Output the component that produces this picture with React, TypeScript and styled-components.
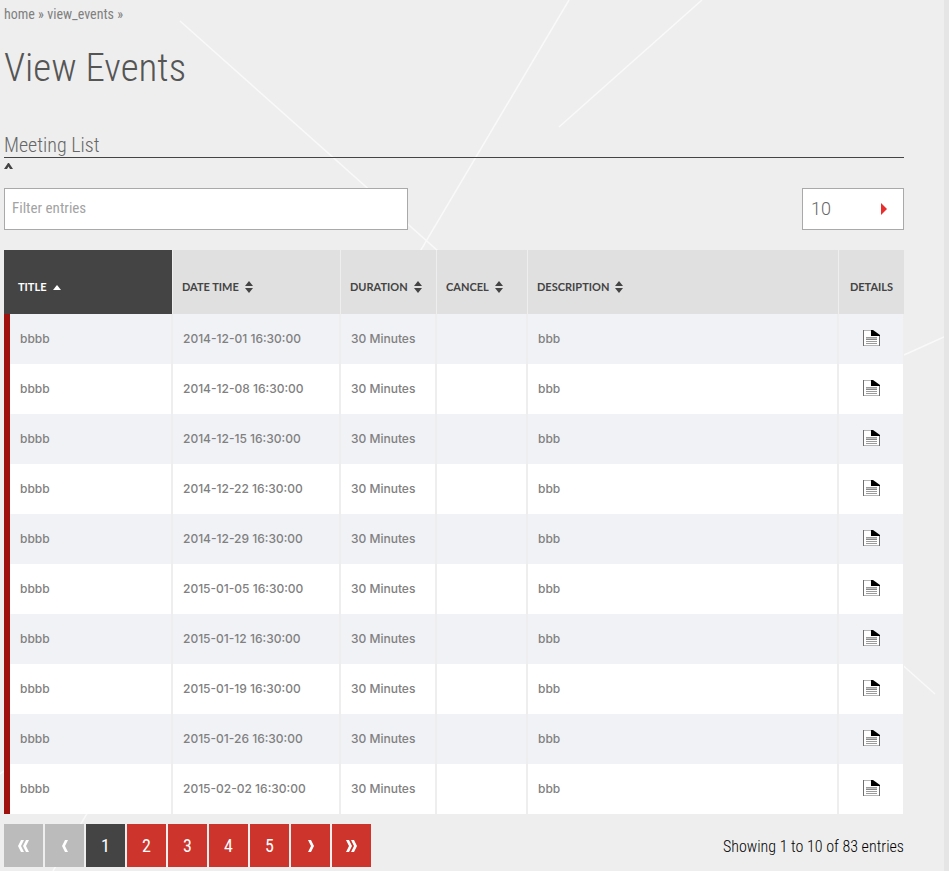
import React, { useState } from "react";
import styled, { createGlobalStyle, css } from "styled-components";

const narrow = `"Roboto Condensed", "Arial Narrow", "Liberation Sans", Arial, sans-serif`;
const wide = `Inter, "Liberation Sans", Arial, sans-serif`;
const heading = `Lato, "Liberation Sans", Arial, sans-serif`;

const GlobalStyle = createGlobalStyle`
  *, *::before, *::after { box-sizing: border-box; }
  html { background: #eeeeee; }
  body { margin: 0; font-family: ${narrow}; font-weight: 300; color: #666666; }
`;

const Page = styled.div`
  position: relative;
  min-height: 100vh;
  border-right: 5px solid #e5e5e5;
  padding: 4px 40px 4px 4px;
  overflow: hidden;
`;

const Backdrop = styled.svg`
  position: absolute;
  top: 0;
  left: 0;
  pointer-events: none;
`;

const Content = styled.main`
  position: relative;
`;

const Breadcrumb = styled.nav`
  font-size: 14px;
  font-weight: 400;
  line-height: 20px;
  color: #808080;

  a {
    color: inherit;
    text-decoration: none;
  }
`;

const Title = styled.h1`
  margin: 18px 0 0;
  font-size: 39px;
  font-weight: 300;
  line-height: 52px;
  color: #555555;
`;

const SectionTitle = styled.h2`
  margin: 38px 0 0;
  padding-top: 1px;
  border-bottom: 1px solid #444444;
  font-size: 20px;
  font-weight: 300;
  line-height: 24px;
`;

const Collapse = styled.button`
  display: flex;
  align-items: center;
  width: 9px;
  height: 16px;
  padding: 0;
  border: 0;
  background: none;
`;

const Filters = styled.div`
  display: flex;
  justify-content: space-between;
  gap: 20px;
  margin: 14px 0 20px;
`;

const FilterInput = styled.input`
  flex: 0 1 404px;
  min-width: 0;
  height: 42px;
  padding: 0 7px 2px;
  border: 1px solid #a9a9a9;
  border-radius: 0;
  background: #ffffff;
  font: 400 15px ${narrow};
  color: #666666;

  &::placeholder {
    color: #a3a3a3;
    opacity: 1;
  }
`;

const SelectBox = styled.div`
  display: grid;
  align-items: center;
  width: 102px;
  height: 42px;
  border: 1px solid #a9a9a9;
  background: #ffffff;

  > * {
    grid-area: 1 / 1;
  }

  > svg {
    justify-self: end;
    margin-right: 16px;
    pointer-events: none;
  }
`;

const SizeSelect = styled.select`
  appearance: none;
  width: 100%;
  height: 40px;
  padding: 0 8px 2px;
  border: 0;
  background: transparent;
  font: 300 18px Roboto, ${wide};
  color: #666666;
`;

const Table = styled.table`
  width: 100%;
  border-spacing: 0;
  table-layout: fixed;
  font-family: ${wide};
`;

const Col = styled.col<{ $width?: number }>`
  ${({ $width }) => $width && `width: ${$width}px;`}
`;

const HeadCell = styled.th<{ $active?: boolean }>`
  height: 64px;
  padding: 10px 0 0 ${({ $active }) => ($active ? 14 : 9)}px;
  border-right: 1px solid #eeeeee;
  background: ${({ $active }) => ($active ? "#444444" : "#e0e0e0")};
  text-align: left;

  &:last-child {
    padding-left: 0;
    border-right: 0;
    text-align: center;
  }
`;

const headText = css<{ $active?: boolean }>`
  font: 700 11px/16px ${heading};
  color: ${({ $active }) => ($active ? "#ffffff" : "#444444")};
  text-transform: uppercase;
  white-space: nowrap;
`;

const SortButton = styled.button<{ $active?: boolean }>`
  display: flex;
  align-items: center;
  gap: 6px;
  padding: 0;
  border: 0;
  background: none;
  ${headText}
`;

const HeadLabel = styled.div<{ $active?: boolean }>`
  ${headText}
`;

const Row = styled.tr`
  background: #ffffff;

  &:nth-child(odd) {
    background: #f1f2f6;
  }
`;

const Cell = styled.td`
  height: 50px;
  padding: 0 10px;
  border-right: 2px solid #eeeeee;
  font-size: 12px;
  font-weight: 500;
  line-height: 18px;
  color: #808080;
  white-space: nowrap;

  &:first-child {
    border-left: 6px solid #9f110c;
  }

  &:last-child {
    padding: 0 0 2px;
    border-right-width: 1px;
  }
`;

const IconLink = styled.a`
  display: flex;
  justify-content: center;
`;

const Footer = styled.div`
  display: flex;
  align-items: center;
  justify-content: space-between;
  margin-top: 10px;
`;

const Pager = styled.nav`
  display: flex;
  gap: 2px;
`;

const PageButton = styled.button<{ $current?: boolean }>`
  display: flex;
  align-items: center;
  justify-content: center;
  width: 39px;
  height: 43px;
  padding: 0;
  border: 0;
  background: ${({ $current }) => ($current ? "#444444" : "#cd342b")};
  font: 400 18px ${narrow};
  color: #ffffff;

  &:disabled {
    background: #bbbbbb;
  }
`;

const Summary = styled.p`
  margin: 0;
  padding-top: 2px;
  font-size: 16px;
  line-height: 20px;
  color: #000000;
`;

const SortIcon = ({ active }: { active?: boolean }) =>
  active ? (
    <svg width="8" height="12" viewBox="0 0 8 12" aria-hidden="true">
      <path d="M4 4 8 9H0Z" fill="#fff" />
    </svg>
  ) : (
    <svg width="8" height="12" viewBox="0 0 8 12" aria-hidden="true">
      <path d="M4 0 8 5H0ZM0 7H8L4 12Z" fill="#444" />
    </svg>
  );

const DocumentIcon = () => (
  <svg width="17" height="16" viewBox="0 0 17 16" aria-hidden="true">
    <path d="M0 0H9L17 6V16H0Z" fill="#fff" />
    <path d="M0 0H9V1H0ZM0 15H17V16H0Z" fill="#b5b5b5" />
    <path d="M0 0H1V16H0ZM16 6H17V16H16Z" fill="#6e6e6e" />
    <path d="M8 0H10L17 5V6H8Z" fill="#000" />
    <path d="M3 7H14V8H3ZM3 11H14V12H3ZM3 13H14V14H3Z" fill="#9b9b9b" />
    <path d="M3 8H14V9H3Z" fill="#c5c5c5" />
    <path d="M3 9H14V10H3Z" fill="#888" />
  </svg>
);

const Chevrons = ({ double, right }: { double?: boolean; right?: boolean }) => {
  const single = "M3 0H6L3 6 6 12H3L0 6Z";
  const width = double ? 11 : 6;
  return (
    <svg width={width} height="12" viewBox={`0 0 ${width} 12`} aria-hidden="true">
      <path
        d={double ? `${single}M8 0H11L8 6 11 12H8L5 6Z` : single}
        fill="#fff"
        transform={right ? `matrix(-1 0 0 1 ${width} 0)` : undefined}
      />
    </svg>
  );
};

const columns: { label: string; width?: number; sortable: boolean }[] = [
  { label: "Title", width: 169, sortable: true },
  { label: "Date Time", width: 168, sortable: true },
  { label: "Duration", width: 96, sortable: true },
  { label: "Cancel", width: 91, sortable: true },
  { label: "Description", sortable: true },
  { label: "Details", width: 65, sortable: false },
];

const dates = [
  "2014-12-01",
  "2014-12-08",
  "2014-12-15",
  "2014-12-22",
  "2014-12-29",
  "2015-01-05",
  "2015-01-12",
  "2015-01-19",
  "2015-01-26",
  "2015-02-02",
];

export default function App() {
  const [filter, setFilter] = useState("");
  const [current, setCurrent] = useState(1);

  return (
    <>
      <GlobalStyle />
      <Page>
        <Backdrop width="944" height="871" viewBox="0 0 944 871" aria-hidden="true">
          <path
            d="M180 21 935 694M569 0 53 871M702 0 559 127M904 355 944 337M0 774 8 768"
            fill="none"
            stroke="#f9f9f9"
            strokeWidth="1.5"
          />
        </Backdrop>
        <Content>
          <Breadcrumb aria-label="Breadcrumb">
            <a href="#home">home</a> » <a href="#view_events">view_events</a> »
          </Breadcrumb>
          <Title>View Events</Title>
          <SectionTitle>Meeting List</SectionTitle>
          <Collapse type="button" aria-label="Collapse meeting list">
            <svg width="9" height="6" viewBox="0 0 9 6" aria-hidden="true">
              <path d="M0 6 4 0H5L9 6H6L4.5 3.5 3 6Z" fill="#444" />
            </svg>
          </Collapse>
          <Filters>
            <FilterInput
              type="text"
              aria-label="Filter entries"
              placeholder="Filter entries"
              value={filter}
              onChange={(event) => setFilter(event.target.value)}
            />
            <SelectBox>
              <SizeSelect aria-label="Entries per page" defaultValue="10">
                <option>10</option>
                <option>25</option>
                <option>50</option>
                <option>100</option>
              </SizeSelect>
              <svg width="6" height="12" viewBox="0 0 6 12" aria-hidden="true">
                <path d="M0 0 6 6 0 12Z" fill="#e92c2c" />
              </svg>
            </SelectBox>
          </Filters>
          <Table>
            <colgroup>
              {columns.map(({ label, width }) => (
                <Col key={label} $width={width} />
              ))}
            </colgroup>
            <thead>
              <tr>
                {columns.map(({ label, sortable }, index) => (
                  <HeadCell key={label} scope="col" $active={index === 0}>
                    {sortable ? (
                      <SortButton type="button" $active={index === 0}>
                        {label}
                        <SortIcon active={index === 0} />
                      </SortButton>
                    ) : (
                      <HeadLabel>{label}</HeadLabel>
                    )}
                  </HeadCell>
                ))}
              </tr>
            </thead>
            <tbody>
              {dates.map((date) => (
                <Row key={date}>
                  <Cell>bbbb</Cell>
                  <Cell>{date} 16:30:00</Cell>
                  <Cell>30 Minutes</Cell>
                  <Cell />
                  <Cell>bbb</Cell>
                  <Cell>
                    <IconLink href={`#event-${date}`} aria-label={`Details for ${date}`}>
                      <DocumentIcon />
                    </IconLink>
                  </Cell>
                </Row>
              ))}
            </tbody>
          </Table>
          <Footer>
            <Pager aria-label="Pages">
              <PageButton type="button" disabled aria-label="First page">
                <Chevrons double />
              </PageButton>
              <PageButton type="button" disabled aria-label="Previous page">
                <Chevrons />
              </PageButton>
              {[1, 2, 3, 4, 5].map((page) => (
                <PageButton
                  key={page}
                  type="button"
                  $current={page === current}
                  onClick={() => setCurrent(page)}
                >
                  {page}
                </PageButton>
              ))}
              <PageButton type="button" aria-label="Next page">
                <Chevrons right />
              </PageButton>
              <PageButton type="button" aria-label="Last page">
                <Chevrons double right />
              </PageButton>
            </Pager>
            <Summary>Showing 1 to 10 of 83 entries</Summary>
          </Footer>
        </Content>
      </Page>
    </>
  );
}
